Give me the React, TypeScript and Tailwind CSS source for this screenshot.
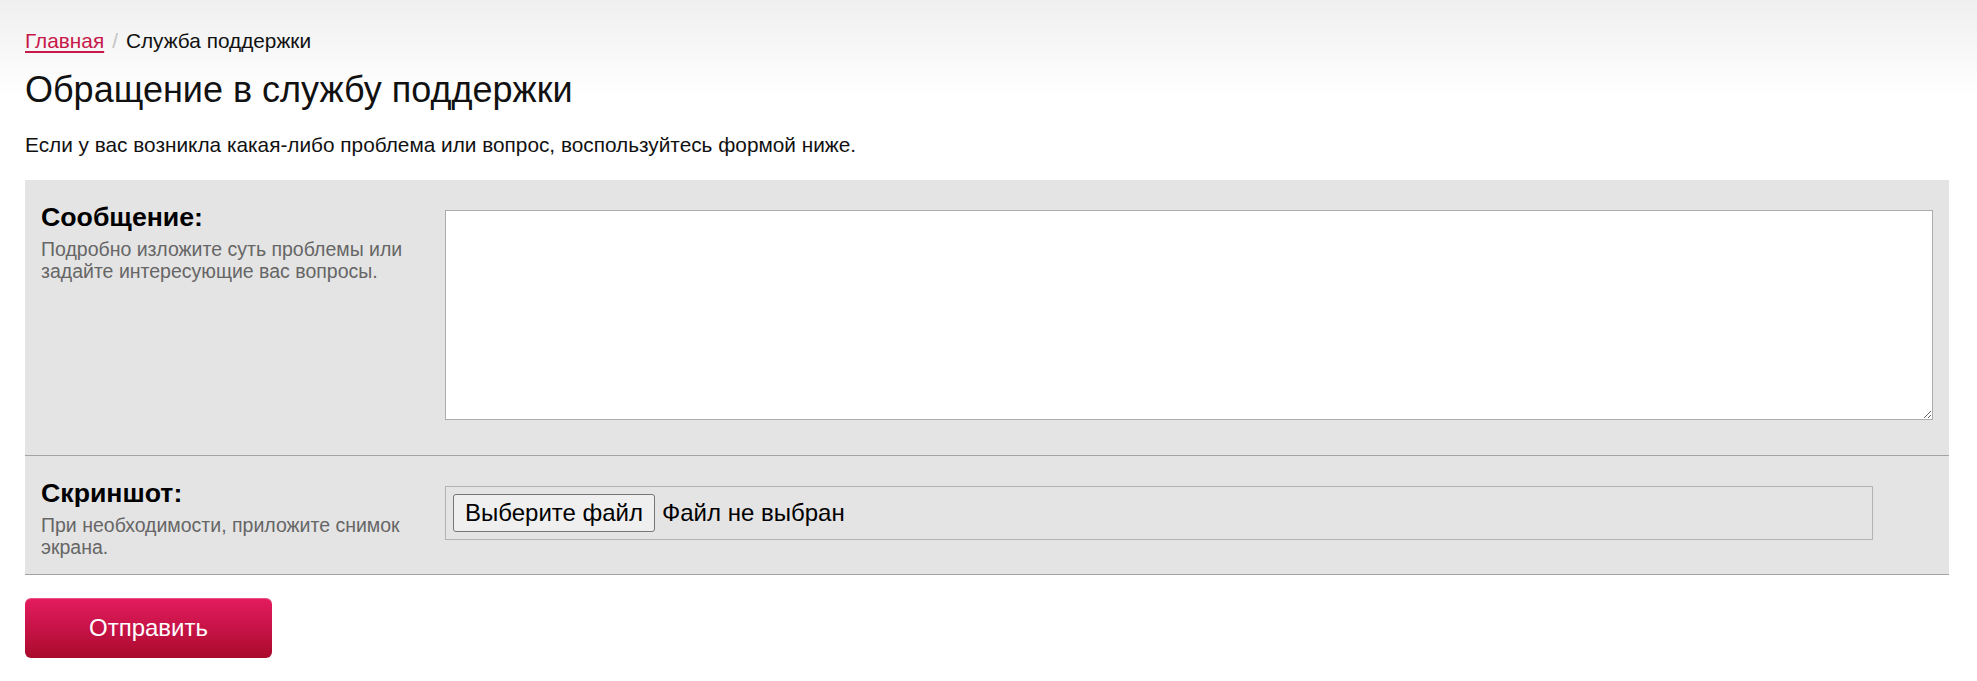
import React from "react";

export default function App() {
  return (
    <div
      className="min-h-[681px] w-full bg-gradient-to-b from-[#efefef] to-white bg-[length:100%_96px] bg-no-repeat text-[#111]"
      style={{ fontFamily: '"Liberation Sans", Arial, sans-serif' }}
    >
      <div className="pl-[25px] pr-[28px] pt-[29px] pb-[20px]">
        <nav className="text-[20.8px] leading-[24px]">
          <a href="#" className="text-[#c8184a] underline decoration-[#c8184a] underline-offset-[3px]">
            Главная
          </a>
          <span className="text-[#c4c4c4] mx-[8px]">/</span>
          <span className="text-[#111]">Служба поддержки</span>
        </nav>

        <h1 className="mt-[17px] text-[36px] leading-[40px] font-normal text-[#111]">
          Обращение в службу поддержки
        </h1>

        <p className="mt-[23px] text-[20.8px] leading-[24px] text-[#111]">
          Если у вас возникла какая-либо проблема или вопрос, воспользуйтесь формой ниже.
        </p>

        <div className="mt-[23px] bg-[#e4e4e4]">
          <div className="flex border-b border-[#a3a3a3] pl-[16px] pr-[16px]">
            <div className="w-[404px] shrink-0 pr-[20px] pt-[22px] pb-[16px]">
              <div className="text-[26.7px] leading-[30px] font-bold text-black">Сообщение:</div>
              <div className="mt-[6px] text-[19.5px] leading-[22px] text-[#666]">
                Подробно изложите суть проблемы или задайте интересующие вас вопросы.
              </div>
            </div>
            <div className="flex-1 pt-[30px] pb-[35px]">
              <textarea className="block h-[210px] w-full resize border border-[#acacac] bg-white outline-none" />
            </div>
          </div>

          <div className="flex border-b border-[#a3a3a3] pl-[16px] pr-[16px]">
            <div className="w-[404px] shrink-0 pr-[20px] pt-[22px] pb-[16px]">
              <div className="text-[26.7px] leading-[30px] font-bold text-black">Скриншот:</div>
              <div className="mt-[6px] text-[19.5px] leading-[22px] text-[#666]">
                При необходимости, приложите снимок экрана.
              </div>
            </div>
            <div className="flex-1 pt-[30px] pb-[34px]">
              <div className="flex h-[54px] w-[96%] items-center border border-[#b3b3b3] pl-[7px]">
                <button
                  type="button"
                  className="h-[38px] w-[202px] rounded-[3px] border border-[#767676] bg-[#efefef] text-[24px] leading-[28px] text-black"
                >
                  Выберите файл
                </button>
                <span className="ml-[7px] text-[24px] leading-[28px] text-black">Файл не выбран</span>
              </div>
            </div>
          </div>
        </div>

        <button
          type="button"
          className="mt-[23px] flex h-[60px] w-[247px] items-center justify-center rounded-[6px] bg-gradient-to-b from-[#e41b60] to-[#aa0a2c] text-[24px] text-white shadow-[inset_0_1px_0_rgba(255,255,255,0.25)]"
        >
          Отправить
        </button>
      </div>
    </div>
  );
}
